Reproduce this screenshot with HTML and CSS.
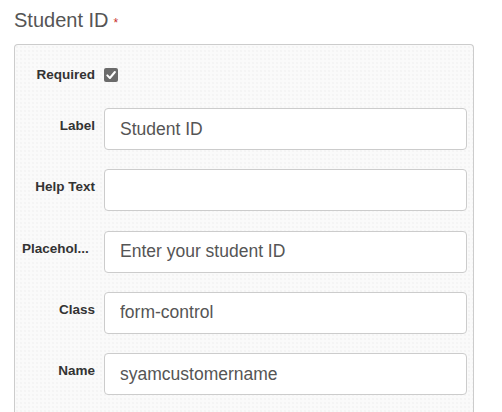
FILE: index.html
```html
<!DOCTYPE html>
<html lang="en">
<head>
<meta charset="utf-8">
<title>Student ID field</title>
<link rel="stylesheet" href="styles.css">
</head>
<body>
<div class="page">
  <h2 class="title">Student ID<span class="req">*</span></h2>
  <div class="panel">
    <div class="row row-check">
      <label class="lbl">Required</label>
      <span class="check">
        <svg width="14" height="14" viewBox="0 0 14 14"><rect x="0" y="0" width="14" height="14" rx="2" fill="#6b6b6b"/><path d="M3.3 7.4 L5.9 10 L10.9 4" fill="none" stroke="#fff" stroke-width="2" stroke-linecap="round" stroke-linejoin="round"/></svg>
      </span>
    </div>
    <div class="rows">
      <div class="row">
        <label class="lbl">Label</label>
        <input class="ctl" type="text" value="Student ID">
      </div>
      <div class="row">
        <label class="lbl">Help Text</label>
        <input class="ctl" type="text" value="">
      </div>
      <div class="row">
        <label class="lbl lbl-short" title="Placeholder">Placehol...</label>
        <input class="ctl" type="text" value="Enter your student ID">
      </div>
      <div class="row">
        <label class="lbl">Class</label>
        <input class="ctl" type="text" value="form-control">
      </div>
      <div class="row">
        <label class="lbl">Name</label>
        <input class="ctl" type="text" value="syamcustomername">
      </div>
    </div>
  </div>
</div>
</body>
</html>
```
FILE: styles.css
```css
html, body {
  margin: 0;
  padding: 0;
  background: #fff;
  font-family: "Liberation Sans", Arial, sans-serif;
}
.page {
  padding: 9px 0 0 14px;
}
.title {
  margin: 0 0 13px 0;
  height: 22px;
  font-size: 20px;
  line-height: 22px;
  font-weight: normal;
  color: #555;
}
.req {
  color: #c9302c;
  font-size: 12px;
  line-height: 1;
  margin-left: 5px;
}
.panel {
  box-sizing: border-box;
  width: 460px;
  border: 1px solid #ccc;
  border-bottom: none;
  border-radius: 4px 4px 0 0;
  background-color: #fafafa;
  background-image: radial-gradient(circle, #f2f2f2 0.6px, transparent 0.9px);
  background-size: 4px 4px;
  padding: 22px 6px 20px 7px;
}
.row {
  display: grid;
  grid-template-columns: 73px 1fr;
  column-gap: 9px;
  align-items: start;
}
.row-check {
  align-items: center;
  height: 16px;
  margin-bottom: 25px;
}
.rows {
  display: flex;
  flex-direction: column;
  gap: 19.25px;
}
.lbl {
  font-size: 13.5px;
  line-height: 16px;
  font-weight: bold;
  color: #333;
  text-align: right;
  white-space: nowrap;
}
.lbl-short {
  text-align: left;
}
.rows .lbl {
  padding-top: 10px;
}
.check {
  display: flex;
  width: 14px;
  height: 14px;
}
.ctl {
  box-sizing: border-box;
  width: 100%;
  height: 42px;
  margin: 0;
  padding: 0 15px;
  border: 1px solid #ccc;
  border-radius: 4px;
  background: #fff;
  font-family: "Liberation Sans", Arial, sans-serif;
  font-size: 17.5px;
  color: #555;
  outline: none;
}
```
